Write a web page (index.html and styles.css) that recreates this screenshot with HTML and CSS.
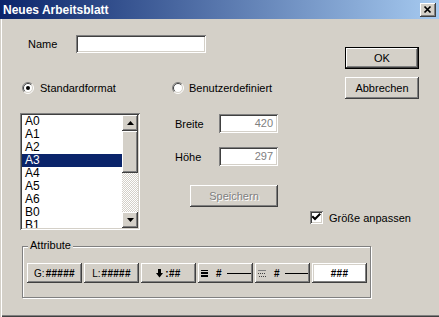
FILE: index.html
```html
<!DOCTYPE html>
<html lang="de">
<head>
<meta charset="utf-8">
<title>Neues Arbeitsblatt</title>
<link rel="stylesheet" href="styles.css">
</head>
<body>
<div class="window">
  <div class="titlebar">
    <span class="title">Neues Arbeitsblatt</span>
    <span class="close-btn">
      <svg width="16" height="14" viewBox="0 0 16 14"><path d="M4.5 3.5 L10.5 9.5 M10.5 3.5 L4.5 9.5" stroke="#000" stroke-width="1.7" fill="none"/></svg>
    </span>
  </div>
  <div class="client">
    <div class="row row-name">
      <span class="name-lbl">Name</span>
      <div class="field name-field"></div>
      <div class="btn btn-default btn-ok">OK</div>
    </div>
    <div class="row row-radio">
      <div class="radio-item first">
        <svg class="radio" width="12" height="12" viewBox="0 0 12 12">
          <circle cx="6" cy="6" r="5" fill="#fff"/>
          <path d="M2.1 9.9 A5.5 5.5 0 0 1 9.9 2.1" stroke="#808080" fill="none"/>
          <path d="M9.9 2.1 A5.5 5.5 0 0 1 2.1 9.9" stroke="#fff" fill="none"/>
          <path d="M2.8 9.2 A4.5 4.5 0 0 1 9.2 2.8" stroke="#404040" fill="none"/>
          <path d="M9.2 2.8 A4.5 4.5 0 0 1 2.8 9.2" stroke="#d4d0c8" fill="none"/>
          <circle cx="6" cy="6" r="2" fill="#000"/>
        </svg>
        <span class="radio-text">Standardformat</span>
      </div>
      <div class="radio-item">
        <svg class="radio" width="12" height="12" viewBox="0 0 12 12">
          <circle cx="6" cy="6" r="5" fill="#fff"/>
          <path d="M2.1 9.9 A5.5 5.5 0 0 1 9.9 2.1" stroke="#808080" fill="none"/>
          <path d="M9.9 2.1 A5.5 5.5 0 0 1 2.1 9.9" stroke="#fff" fill="none"/>
          <path d="M2.8 9.2 A4.5 4.5 0 0 1 9.2 2.8" stroke="#404040" fill="none"/>
          <path d="M9.2 2.8 A4.5 4.5 0 0 1 2.8 9.2" stroke="#d4d0c8" fill="none"/>
        </svg>
        <span class="radio-text second">Benutzerdefiniert</span>
      </div>
      <div class="btn btn-cancel">Abbrechen</div>
    </div>
    <div class="row row-main">
      <div class="listbox">
        <ul class="items">
          <li>A0</li>
          <li>A1</li>
          <li>A2</li>
          <li class="sel">A3</li>
          <li>A4</li>
          <li>A5</li>
          <li>A6</li>
          <li>B0</li>
          <li>B1</li>
        </ul>
        <div class="scrollbar">
          <div class="btn sb-btn"><svg width="7" height="4" viewBox="0 0 7 4"><polygon points="3.5,0 7,4 0,4" fill="#000"/></svg></div>
          <div class="btn sb-thumb"></div>
          <div class="sb-track"></div>
          <div class="btn sb-btn"><svg width="7" height="4" viewBox="0 0 7 4"><polygon points="0,0 7,0 3.5,4" fill="#000"/></svg></div>
        </div>
      </div>
      <div class="sizes">
        <div class="size-row">
          <span class="size-lbl">Breite</span>
          <div class="field num-field">420</div>
        </div>
        <div class="size-row second">
          <span class="size-lbl">Höhe</span>
          <div class="field num-field">297</div>
        </div>
        <div class="btn btn-save">Speichern</div>
        <div class="check-row">
          <span class="checkbox">
            <svg width="9" height="9" viewBox="0 0 9 9"><path d="M1 4 L3 6 L7.5 1.5" stroke="#000" stroke-width="2" fill="none" stroke-linecap="square"/></svg>
          </span>
          <span class="check-text">Größe anpassen</span>
        </div>
      </div>
    </div>
    <div class="group">
      <span class="legend">Attribute</span>
      <div class="attr-row">
        <div class="btn attr"><span class="reg">G:</span><b>#####</b></div>
        <div class="btn attr"><span class="reg">L:</span><b>#####</b></div>
        <div class="btn attr">
          <svg width="7" height="9" viewBox="0 0 7 9"><rect x="2" y="0" width="3" height="5" fill="#000"/><polygon points="0,4 7,4 3.5,8.5" fill="#000"/></svg><b>:##</b>
        </div>
        <div class="btn attr line-attr">
          <svg class="ico" width="7" height="7" viewBox="0 0 7 7"><rect x="0" y="0" width="7" height="1" fill="#000"/><rect x="0" y="2" width="7" height="2" fill="#000"/><rect x="0" y="5" width="7" height="2" fill="#000"/></svg>
          <b>#</b><span class="hline"></span>
        </div>
        <div class="btn attr line-attr">
          <svg class="ico" width="8" height="7" viewBox="0 0 8 7"><rect x="0" y="0" width="8" height="1" fill="#808080"/><rect x="0" y="3" width="1" height="1" fill="#404040"/><rect x="2" y="3" width="1" height="1" fill="#404040"/><rect x="4" y="3" width="1" height="1" fill="#404040"/><rect x="6" y="3" width="1" height="1" fill="#404040"/><rect x="1" y="6" width="1" height="1" fill="#404040"/><rect x="3" y="6" width="1" height="1" fill="#404040"/><rect x="5" y="6" width="1" height="1" fill="#404040"/><rect x="7" y="6" width="1" height="1" fill="#404040"/></svg>
          <b>#</b><span class="hline"></span>
        </div>
        <div class="btn attr white"><b>###</b></div>
      </div>
    </div>
  </div>
</div>
</body>
</html>
```
FILE: styles.css
```css
* { box-sizing: border-box; }
body {
  margin: 0;
  background: #d4d0c8;
  font-family: "Liberation Sans", Arial, sans-serif;
  font-size: 11px;
  color: #000;
}
.window {
  width: 439px;
  height: 317px;
  display: flex;
  flex-direction: column;
  background: #d4d0c8;
  overflow: hidden;
  box-shadow: inset 0 -1px #404040, inset 0 -2px #808080;
}
.titlebar {
  flex: none;
  height: 19px;
  display: flex;
  align-items: center;
  background: linear-gradient(to right, #0a246a, #a6caf0);
}
.title {
  color: #fff;
  font-weight: bold;
  font-size: 12px;
  margin-left: 3px;
}
.close-btn {
  margin-left: auto;
  margin-right: 3px;
  width: 16px;
  height: 14px;
  display: flex;
  background: #d4d0c8;
  box-shadow: inset -1px -1px #404040, inset 1px 1px #fff, inset -2px -2px #808080;
}
.client {
  flex: 1;
  box-shadow: inset 1px 0 #d4d0c8, inset 2px 0 #fff;
}
.row { display: flex; }

.btn {
  display: flex;
  align-items: center;
  justify-content: center;
  background: #d4d0c8;
  box-shadow: inset -1px -1px #404040, inset 1px 1px #fff, inset -2px -2px #808080, inset 2px 2px #d4d0c8;
}
.field {
  background: #fff;
  box-shadow: inset 1px 1px #808080, inset -1px -1px #fff, inset 2px 2px #404040, inset -2px -2px #d4d0c8;
}

/* row 1 */
.row-name {
  margin-top: 16px;
  align-items: flex-start;
}
.name-lbl {
  margin-left: 28px;
  width: 48px;
  line-height: 18px;
}
.name-field { width: 130px; height: 18px; }
.btn-default { border: 1px solid #000; }
.btn-ok {
  margin-left: auto;
  margin-right: 20px;
  margin-top: 12px;
  width: 74px;
  height: 22px;
}

/* row 2 */
.row-radio {
  margin-top: 8px;
  height: 22px;
  align-items: center;
}
.radio-item { display: flex; align-items: center; }
.radio-item.first { margin-left: 22px; width: 150px; }
.radio { flex: none; }
.radio-text { margin-left: 6px; }
.radio-text.second { margin-left: 5px; }
.btn-cancel {
  margin-left: auto;
  margin-right: 20px;
  width: 74px;
  height: 22px;
}

/* row 3 */
.row-main {
  margin-top: 14px;
  align-items: flex-start;
}
.listbox {
  margin-left: 20px;
  width: 120px;
  height: 117px;
  padding: 2px;
  display: flex;
  background: #fff;
  box-shadow: inset 1px 1px #808080, inset -1px -1px #fff, inset 2px 2px #404040, inset -2px -2px #d4d0c8;
}
.items {
  list-style: none;
  margin: 0;
  padding: 0;
  flex: 1;
  overflow: hidden;
  font-size: 12px;
}
.items li {
  height: 13px;
  line-height: 13px;
  padding-left: 3px;
}
.items li.sel { background: #0a246a; color: #fff; }
.scrollbar {
  width: 16px;
  display: flex;
  flex-direction: column;
}
.sb-btn { height: 16px; flex: none; }
.sb-thumb { height: 42px; flex: none; }
.sb-track {
  flex: 1;
  background: repeating-conic-gradient(#fff 0 25%, #d4d0c8 0 50%) 0 0 / 2px 2px;
}
.sizes {
  margin-left: 35px;
  margin-top: 1px;
  display: flex;
  flex-direction: column;
}
.size-row { display: flex; align-items: center; height: 19px; }
.size-row.second { margin-top: 14px; }
.size-lbl { width: 44px; }
.num-field {
  width: 59px;
  height: 19px;
  color: #808080;
  text-align: right;
  padding-right: 5px;
  line-height: 19px;
}
.btn-save {
  margin-top: 19px;
  margin-left: 15px;
  width: 88px;
  height: 22px;
  color: #808080;
  text-shadow: 1px 1px #fff;
}
.check-row {
  margin-top: 4px;
  margin-left: 135px;
  display: flex;
  align-items: center;
  white-space: nowrap;
}
.checkbox {
  width: 13px;
  height: 13px;
  display: flex;
  align-items: center;
  justify-content: center;
  background: #fff;
  box-shadow: inset 1px 1px #808080, inset -1px -1px #fff, inset 2px 2px #404040, inset -2px -2px #d4d0c8;
}
.check-text { margin-left: 6px; }

/* group */
.group {
  position: relative;
  margin-top: 16px;
  margin-left: 22px;
  width: 349px;
  height: 52px;
  border: 1px solid #808080;
  box-shadow: inset 1px 1px #fff, 1px 1px #fff;
  padding: 16px 0 0 4px;
}
.legend {
  position: absolute;
  left: 5px;
  top: -8px;
  padding: 0 2px;
  background: #d4d0c8;
  line-height: 13px;
}
.attr-row { display: flex; gap: 2px; }
.attr {
  width: 55px;
  height: 20px;
  font-size: 10px;
  gap: 1px;
}
.attr b { font-weight: bold; letter-spacing: 0.3px; }
.attr .reg { font-weight: normal; }
.attr svg { margin-right: 1px; }
.attr.white { background: #fff; }
.line-attr {
  justify-content: flex-start;
  padding: 0 2px 0 3px;
}
.line-attr .ico { margin-right: 7px; }
.line-attr .hline {
  flex: 1;
  height: 1px;
  background: #000;
  margin-left: 4px;
}
```
